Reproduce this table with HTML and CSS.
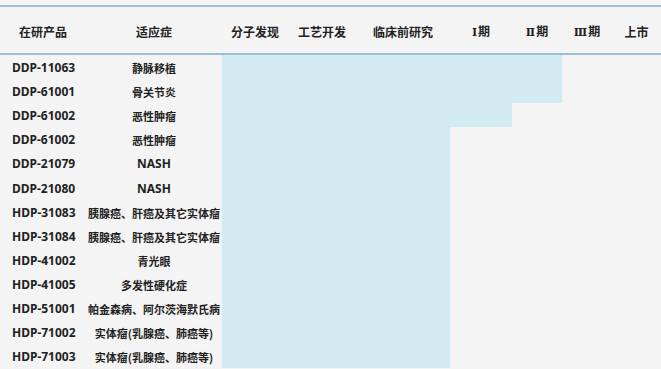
FILE: index.html
```html
<!DOCTYPE html>
<html lang="zh">
<head>
<meta charset="utf-8">
<link rel="stylesheet" href="styles.css">
</head>
<body>
<div class="table">
  <div class="head">
    <div class="h">在研产品</div>
    <div class="h">适应症</div>
    <div class="h">分子发现</div>
    <div class="h">工艺开发</div>
    <div class="h">临床前研究</div>
    <div class="h"><span class="num">Ⅰ</span>期</div>
    <div class="h"><span class="num">Ⅱ</span>期</div>
    <div class="h"><span class="num">Ⅲ</span>期</div>
    <div class="h">上市</div>
  </div>
  <div class="body">
    <div class="row"><div class="code">DDP-11063</div><div class="ind">静脉移植</div><div class="bar to-3"></div></div>
    <div class="row"><div class="code">DDP-61001</div><div class="ind">骨关节炎</div><div class="bar to-3"></div></div>
    <div class="row"><div class="code">DDP-61002</div><div class="ind">恶性肿瘤</div><div class="bar to-2"></div></div>
    <div class="row"><div class="code">DDP-61002</div><div class="ind">恶性肿瘤</div><div class="bar to-1"></div></div>
    <div class="row"><div class="code">DDP-21079</div><div class="ind latin">NASH</div><div class="bar to-1"></div></div>
    <div class="row"><div class="code">DDP-21080</div><div class="ind latin">NASH</div><div class="bar to-1"></div></div>
    <div class="row"><div class="code">HDP-31083</div><div class="ind">胰腺癌、肝癌及其它实体瘤</div><div class="bar to-1"></div></div>
    <div class="row"><div class="code">HDP-31084</div><div class="ind">胰腺癌、肝癌及其它实体瘤</div><div class="bar to-1"></div></div>
    <div class="row"><div class="code">HDP-41002</div><div class="ind">青光眼</div><div class="bar to-1"></div></div>
    <div class="row"><div class="code">HDP-41005</div><div class="ind">多发性硬化症</div><div class="bar to-1"></div></div>
    <div class="row"><div class="code">HDP-51001</div><div class="ind">帕金森病、阿尔茨海默氏病</div><div class="bar to-1"></div></div>
    <div class="row"><div class="code">HDP-71002</div><div class="ind">实体瘤(乳腺癌、肺癌等)</div><div class="bar to-1"></div></div>
    <div class="row"><div class="code">HDP-71003</div><div class="ind">实体瘤(乳腺癌、肺癌等)</div><div class="bar to-1"></div></div>
  </div>
</div>
</body>
</html>
```

FILE: styles.css
```css
html, body {
  margin: 0;
  padding: 0;
  background: #f4f4f4;
}
body {
  font-family: "Noto Sans", "Noto Sans CJK SC", sans-serif;
  font-weight: 700;
  font-size: 12px;
  color: #222;
  width: 661px;
  height: 369px;
  overflow: hidden;
}
.table {
  padding-top: 5px;
}
.head, .row {
  display: grid;
  grid-template-columns: 86px 136px 66px 68px 94px 62px 50px 50px 49px;
}
.head {
  height: 46px;
  box-sizing: content-box;
  border-top: 2px solid #98c2d4;
  border-bottom: 2px solid #98c2d4;
  align-items: center;
  font-family: "Noto Sans CJK SC", sans-serif;
}
.h {
  text-align: center;
  line-height: 16px;
  padding-top: 3px;
}
.num {
  font-family: "DejaVu Serif", serif;
  font-weight: 700;
  font-size: 11px;
  margin-right: 1px;
}
.row {
  height: 24.1px;
  align-items: center;
}
.code {
  padding-left: 12px;
  padding-top: 2px;
  line-height: 16px;
}
.ind {
  text-align: center;
  line-height: 16px;
  padding-top: 2px;
  white-space: nowrap;
  font-family: "Noto Sans CJK SC", sans-serif;
  font-size: 11px;
}
.ind.latin {
  font-family: "Noto Sans", sans-serif;
  font-size: 12px;
}
.bar {
  align-self: stretch;
  background: #d2eaf2;
  grid-column-start: 3;
}
.bar.to-1 { grid-column-end: 6; }
.bar.to-2 { grid-column-end: 7; }
.bar.to-3 { grid-column-end: 8; }
```
